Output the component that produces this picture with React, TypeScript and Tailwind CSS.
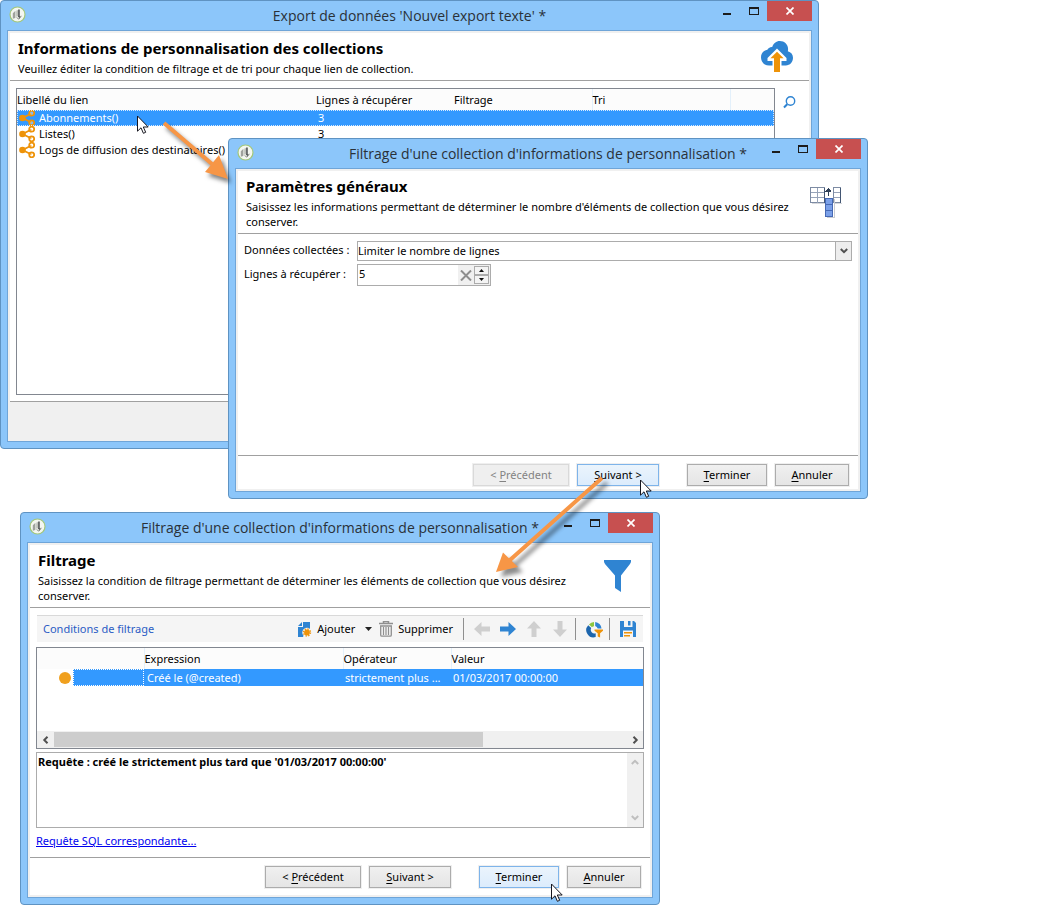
import type { ReactNode } from "react";

function AppLogo() {
  return (
    <svg width="17" height="17" viewBox="0 0 17 17" aria-hidden="true" className="block">
      <circle cx="8.5" cy="8.5" r="7.5" fill="#f4f7f1" stroke="#a3c77a" strokeWidth="1.200" />
      <path d="M3.800 7.200 6.200 5v7l-2.400.8z" fill="#9fa29d" />
      <path d="M6.200 5 7.800 5.600v5L6.200 12z" fill="#cfd2cc" />
      <path d="M8.200 4.200v6" stroke="#a5a8a3" strokeWidth="1" />
      <path d="M9.200 3.400h1.500v7.200l1-.8-.8 2.400L8.600 10.600l.6-.2z" fill="#45484a" />
      <path d="m7.600 11.600 2.400 1.600 2.400-3.400" fill="none" stroke="#8f928d" strokeWidth="1" />
    </svg>
  );
}

function CloudUpload() {
  return (
    <svg width="32" height="32" viewBox="0 0 32 32" aria-hidden="true">
      <path
        d="M8 24.5C3.300 24.500 0 21 0 16.300c0-4 2.600-7 6.400-7.600C7 7.200 9 5.700 11.200 5.900 12.400 2.400 15.200 0 18.800 0c4.700 0 8.200 3.400 8.300 8 0 .8-.1 1.500-.3 2.200 3.200.8 5.200 3.300 5.200 6.600 0 4.300-3 7.700-7.200 7.700z"
        fill="#2f84d2"
      />
      <path d="M16 7.500 25.500 17v3h-5V26h-9v-6h-5v-3z" fill="#fff" />
      <path d="M16 10.700 22.600 17.300H19V31h-6V17.300H9.400z" fill="#ee9309" />
    </svg>
  );
}

function ColumnsIcon() {
  return (
    <svg width="32" height="32" viewBox="0 0 32 32" shapeRendering="crispEdges" aria-hidden="true">
      <path d="M2 17.500h13M25 17.500h7" fill="none" stroke="#d6d8dc" />
      <path d="M.5 1.500h14v15H.5zM23.500 1.500h7v15h-7z" fill="#fff" stroke="#7d8ba3" />
      <path d="M.5 6.500h14M.5 11.500h14M7.500 1.500v15M23.500 6.500h7M23.500 11.500h7" fill="none" stroke="#97a3b8" />
      <path d="M14.500 2v15M30.500 2v15" stroke="#435673" />
      <path d="M17 31.500h7V13" fill="none" stroke="#c9ccd2" />
      <path d="M15.500 12.500h7v18h-7z" fill="#7ba0e8" stroke="#4669b4" />
      <path d="M15.500 18.500h7M15.500 24.500h7" stroke="#4669b4" />
      <path d="M18 3h1v7h-1z" fill="#2f4058" />
      <path d="m18.500 2-3 3.500h6z" fill="#2f4058" />
    </svg>
  );
}

function FunnelIcon() {
  return (
    <svg width="32" height="32" viewBox="0 0 32 32" aria-hidden="true">
      <path d="M2 0h27v1.500c0 1-.4 1.700-1.200 2.700L19 15.500V32l-6-4v-12.500L3.200 4.200C2.400 3.200 2 2.500 2 1.500z" fill="#2f84d2" />
    </svg>
  );
}

function LinkIcon() {
  return (
    <svg width="16" height="16" viewBox="0 0 16 16" aria-hidden="true" className="block shrink-0">
      <path d="M12.500 3.500 3.500 8l9 4.500" fill="none" stroke="#ee9309" strokeWidth="1.800" />
      <circle cx="3.500" cy="8" r="3.300" fill="#ee9309" />
      <circle cx="12.700" cy="3.200" r="2.500" fill="#fff" fillOpacity=".35" stroke="#ee9309" strokeWidth="1.800" />
      <circle cx="12.700" cy="12.800" r="2.500" fill="#fff" fillOpacity=".35" stroke="#ee9309" strokeWidth="1.800" />
    </svg>
  );
}

function SearchIcon() {
  return (
    <svg width="13" height="13" viewBox="0 0 13 13" aria-hidden="true" className="block">
      <circle cx="7.500" cy="5" r="4.200" fill="none" stroke="#2f84d2" strokeWidth="1.400" />
      <path d="m4.200 8.300-3.200 3.200" stroke="#2f84d2" strokeWidth="2" />
    </svg>
  );
}

function Pointer() {
  return (
    <svg width="12" height="19" viewBox="0 0 12 19" aria-hidden="true" className="block">
      <path d="M.5 1v15.200l3.500-3.400 2.400 5.500 2.300-1-2.400-5.300h4.900z" fill="#fff" stroke="#16161f" strokeWidth="1" />
    </svg>
  );
}

type WindowProps = { title: string; place: string; children: ReactNode };

function AppWindow({ title, place, children }: WindowProps) {
  return (
    <section className={`absolute rounded-[4px] border border-[#5f93c2] bg-[#8cc6fa] px-[6px] pb-[6px] ${place}`}>
      <header className="grid h-[29px] grid-cols-[1fr_auto_1fr] items-start">
        <span className="pl-[2px] pt-[5px]">
          <AppLogo />
        </span>
        <h1 className="pt-[5px] font-['Open_Sans',sans-serif] text-[14px] leading-[20px] whitespace-nowrap text-[#2a3138]">
          {title}
        </h1>
        <div className="flex justify-end text-[#1c1c1c]">
          <button type="button" aria-label="Réduire" className="flex h-[20px] w-[26px] items-center justify-center">
            <svg width="8" height="8" viewBox="0 0 8 8" className="block">
              <path d="M0 6h8v2H0z" fill="currentColor" />
            </svg>
          </button>
          <button type="button" aria-label="Agrandir" className="flex h-[20px] w-[27px] items-center justify-center">
            <svg width="10" height="8" viewBox="0 0 10 8" className="block" shapeRendering="crispEdges">
              <path d="M0 0h10v8H0zM1 2v5h8V2z" fillRule="evenodd" fill="currentColor" />
            </svg>
          </button>
          <button
            type="button"
            aria-label="Fermer"
            className="flex h-[20px] w-[45px] items-center justify-center bg-[#c75050] text-white"
          >
            <svg width="8" height="8" viewBox="0 0 8 8" className="block">
              <path d="m.5.5 7 7M7.500.5l-7 7" stroke="currentColor" strokeWidth="1.700" />
            </svg>
          </button>
        </div>
      </header>
      <div className="border border-[#6fa5d8] bg-[#f0f0f0] p-[2px]">
        <div className="bg-white">{children}</div>
      </div>
    </section>
  );
}

function StepHeader({ title, text, icon }: { title: string; text: string; icon: ReactNode }) {
  return (
    <div className="flex items-center border-b border-[#a0a0a0] pr-4 pl-2">
      <div className="grow pt-[5px] pb-[4px]">
        <h2 className="text-[15px] leading-[20px] font-bold">{title}</h2>
        <p className="mt-[3px] max-w-[556px] leading-[15px]">{text}</p>
      </div>
      {icon}
    </div>
  );
}

type ActionProps = { access: string; rest: string; before?: string; width: string; state?: "hot" | "off" };

function Action({ access, rest, before = "", width, state }: ActionProps) {
  const look =
    state === "hot"
      ? "border-[#7eb4ea] bg-linear-to-b from-[#ebf4fc] to-[#dcecfc]"
      : state === "off"
        ? "border-[#d9d9d9] bg-[#efefef] text-[#838383]"
        : "border-[#acacac] bg-linear-to-b from-[#f0f0f0] to-[#e5e5e5]";
  return (
    <button
      type="button"
      disabled={state === "off"}
      className={`h-[22px] border leading-[20px] ring-1 ring-[#efefef] ${width} ${look}`}
    >
      {before}
      <span className="underline underline-offset-2">{access}</span>
      {rest}
    </button>
  );
}

function Actions({ pad, first, next, finish }: { pad: string; first?: "off"; next?: "hot"; finish?: "hot" }) {
  return (
    <div className={`flex justify-end gap-2 border-t border-[#a0a0a0] pt-2 pr-[9px] ${pad}`}>
      <Action before="< " access="P" rest="récédent" width="w-[96px]" state={first} />
      <Action access="S" rest="uivant >" width="w-[82px]" state={next} />
      <div className="ml-5 flex gap-2">
        <Action access="T" rest="erminer" width="w-[80px]" state={finish} />
        <Action access="A" rest="nnuler" width="w-[74px]" />
      </div>
    </div>
  );
}

const links = [
  { label: "Abonnements()", lines: "3" },
  { label: "Listes()", lines: "3" },
  { label: "Logs de diffusion des destinataires()", lines: "3" },
];

function ExportWindow() {
  return (
    <AppWindow title="Export de données 'Nouvel export texte' *" place="top-0 left-0 w-[819px]">
      <StepHeader
        title="Informations de personnalisation des collections"
        text="Veuillez éditer la condition de filtrage et de tri pour chaque lien de collection."
        icon={<CloudUpload />}
      />
      <div className="flex items-start gap-2 pt-[7px] pr-[13px] pb-[6px] pl-[6px]">
        <div className="min-h-[307px] grow border border-[#828790]">
          <table className="w-full table-fixed border-collapse text-left">
            <colgroup>
              <col className="w-[299px]" />
              <col className="w-[138px]" />
              <col className="w-[138px]" />
              <col className="w-[138px]" />
              <col />
            </colgroup>
            <thead>
              <tr className="h-[21px] bg-[#fcfcfc]">
                <th className="p-0 font-normal">Libellé du lien</th>
                <th className="p-0 font-normal">Lignes à récupérer</th>
                <th className="p-0 font-normal">Filtrage</th>
                <th className="border-l border-[#e3f0fb] p-0 font-normal">Tri</th>
                <th className="border-l border-[#e3f0fb] p-0" />
              </tr>
            </thead>
            <tbody>
              {links.map((link, i) => (
                <tr
                  key={link.label}
                  className={
                    i === 0
                      ? "h-[16px] bg-[#3399ff] text-white outline-1 -outline-offset-1 outline-white/80 outline-dotted"
                      : "h-[16px]"
                  }
                >
                  <td className="p-0">
                    <span className="flex items-center gap-1 pl-[2px] leading-[16px] whitespace-nowrap">
                      <LinkIcon />
                      {link.label}
                    </span>
                  </td>
                  <td className="p-0 pl-[2px] leading-[16px]">{link.lines}</td>
                  <td className="p-0" />
                  <td className="p-0" />
                  <td className="p-0" />
                </tr>
              ))}
            </tbody>
          </table>
        </div>
        <button type="button" aria-label="Afficher le détail" className="pt-[8px]">
          <SearchIcon />
        </button>
      </div>
      <div className="h-[38px] border-t border-[#a0a0a0] bg-[#f0f0f0]" />
    </AppWindow>
  );
}

function SettingsWindow() {
  return (
    <AppWindow
      title="Filtrage d'une collection d'informations de personnalisation *"
      place="top-[138px] left-[228px] w-[640px]"
    >
      <StepHeader
        title="Paramètres généraux"
        text="Saisissez les informations permettant de déterminer le nombre d'éléments de collection que vous désirez conserver."
        icon={<ColumnsIcon />}
      />
      <div className="grid min-h-[221px] grid-cols-[113px_1fr] content-start gap-y-[3px] pt-[7px] pr-[6px] pl-[6px]">
        <label htmlFor="collected" className="leading-[18px]">
          Données collectées :
        </label>
        <div className="grid grid-cols-[1fr_16px] border border-[#acacac]">
          <select
            id="collected"
            className="col-span-2 col-start-1 row-start-1 h-[18px] w-full appearance-none bg-transparent leading-[18px] outline-none"
          >
            <option>Limiter le nombre de lignes</option>
          </select>
          <span className="pointer-events-none col-start-2 row-start-1 flex items-center justify-center border-l border-[#acacac] bg-[#ededed]">
            <svg width="8" height="6" viewBox="0 0 8 6">
              <path d="m.8 1 3.200 3.200L7.200 1" fill="none" stroke="#505050" strokeWidth="2" />
            </svg>
          </span>
        </div>
        <label htmlFor="lines" className="leading-[20px]">
          Lignes à récupérer :
        </label>
        <div className="flex h-[22px] w-[134px] border border-[#acacac] bg-[#f0f0f0] pr-px">
          <input id="lines" defaultValue="5" className="w-[100px] min-w-0 bg-white pb-[2px] pl-px outline-none" />
          <button type="button" aria-label="Effacer" className="flex grow items-center justify-center">
            <svg width="12" height="11" viewBox="0 0 12 11">
              <path d="m1 .5 10 10M11 .5l-10 10" stroke="#8d8d8d" strokeWidth="2" />
            </svg>
          </button>
          <span className="my-px flex w-[15px] flex-col justify-between">
            <button type="button" aria-label="Augmenter" className="flex h-[9px] items-center justify-center border border-[#acacac] bg-[#f4f4f4]">
              <svg width="5" height="3" viewBox="0 0 5 3">
                <path d="M2.500 0 5 3H0z" fill="#111" />
              </svg>
            </button>
            <button type="button" aria-label="Diminuer" className="flex h-[9px] items-center justify-center border border-[#acacac] bg-[#f4f4f4]">
              <svg width="5" height="3" viewBox="0 0 5 3">
                <path d="M2.500 3 5 0H0z" fill="#111" />
              </svg>
            </button>
          </span>
        </div>
      </div>
      <Actions pad="pb-[3px]" first="off" next="hot" />
    </AppWindow>
  );
}

function ArrowIcon({ turn, color }: { turn: string; color: string }) {
  return (
    <svg width="16" height="14" viewBox="0 0 16 14" aria-hidden="true" className={`block ${turn} ${color}`}>
      <path d="M0 4.500h8.500V0L16 7l-7.500 7V9.500H0z" fill="currentColor" />
    </svg>
  );
}

function Toolbar() {
  return (
    <div className="mx-px flex h-[27px] items-center border-t border-[#d9d9d9] bg-[#f5f5f5] pr-[7px] pl-[6px]">
      <span className="grow text-[#2b5cc4]">Conditions de filtrage</span>
      <button type="button" className="flex items-center gap-[5px]">
        <svg width="14" height="15" viewBox="0 0 14 15" aria-hidden="true">
          <path d="M5 0h7v7.500H8L5 15H0V5h5z" fill="#2f84d2" />
          <path d="M0 4 4 0v4z" fill="#2f84d2" />
          <circle cx="9" cy="10.500" r="4.700" fill="#f5f5f5" />
          <circle cx="9" cy="10.500" r="2.900" fill="#ee9309" />
          <circle cx="9" cy="10.500" r="3.500" fill="none" stroke="#ee9309" strokeWidth="1.400" strokeDasharray="1.400 1.350" />
        </svg>
        Ajouter
      </button>
      <button type="button" aria-label="Options d'ajout" className="ml-[10px]">
        <svg width="7" height="4" viewBox="0 0 7 4" className="block">
          <path d="M0 0h7L3.500 4z" fill="#222" />
        </svg>
      </button>
      <button type="button" className="ml-[7px] flex items-center gap-[5px]">
        <svg width="14" height="16" viewBox="0 0 14 16" fill="none" stroke="#8f8f8f" aria-hidden="true">
          <path d="M0 2.500h14M4.500 2V.6h5V2" strokeWidth="1.500" />
          <path d="M1.700 5v9q0 1.200 1.200 1.200h8.200q1.200 0 1.200-1.200V5z" strokeWidth="1.300" />
          <path d="M4.500 6v8M7 6v8M9.500 6v8" strokeWidth="1.200" />
        </svg>
        Supprimer
      </button>
      <span className="mr-[10px] ml-[10px] h-[22px] w-px bg-[#8f8f8f]" />
      <div className="flex items-center gap-[10px]">
        <button type="button" aria-label="Précédent">
          <ArrowIcon turn="rotate-180" color="text-[#cfcfcf]" />
        </button>
        <button type="button" aria-label="Suivant">
          <ArrowIcon turn="rotate-0" color="text-[#2f84d2]" />
        </button>
        <button type="button" aria-label="Monter">
          <ArrowIcon turn="-rotate-90" color="text-[#cfcfcf]" />
        </button>
        <button type="button" aria-label="Descendre">
          <ArrowIcon turn="rotate-90" color="text-[#cfcfcf]" />
        </button>
      </div>
      <span className="mr-[10px] ml-[7px] h-[22px] w-px bg-[#8f8f8f]" />
      <button type="button" aria-label="Répartition">
        <svg width="17" height="17" viewBox="0 0 17 17" className="block">
          <path d="M8 1v4.200a3.500 3.500 0 0 0-2 1L3 3.400A7 7 0 0 1 8 1z" fill="#8cc63f" />
          <path d="M9.200 1a7 7 0 0 1 6.300 6.500h-3.800a3.600 3.600 0 0 0-2.500-2.500z" fill="#2f84d2" />
          <path d="M2.200 4.200 5.200 7a3.700 3.700 0 0 0 4.500 5.200v3.900A7.300 7.300 0 0 1 2.200 4.200z" fill="#1c65ad" />
          <path d="M8.500 8.500H17v1.300l-2.900 2.500V16.500l-2.400-1v-3.200L8.500 9.800z" fill="#ee9309" />
        </svg>
      </button>
      <span className="mr-[10px] ml-[6px] h-[22px] w-px bg-[#8f8f8f]" />
      <button type="button" aria-label="Enregistrer">
        <svg width="16" height="16" viewBox="0 0 16 16" className="block">
          <path d="M0 0h4v6h8.500V0H14l2 2v14h-3V9.500H3V16H0z" fill="#2f84d2" />
          <path d="M8 0h2.500v4.500H8z" fill="#2f84d2" />
          <path d="M4 11h8v1.600H4zM4 14h6v1.600H4z" fill="#ee9309" />
        </svg>
      </button>
    </div>
  );
}

function FilterWindow() {
  return (
    <AppWindow
      title="Filtrage d'une collection d'informations de personnalisation *"
      place="top-[512px] left-[20px] w-[640px]"
    >
      <StepHeader
        title="Filtrage"
        text="Saisissez la condition de filtrage permettant de déterminer les éléments de collection que vous désirez conserver."
        icon={<FunnelIcon />}
      />
      <div className="pt-[7px] pr-[6px] pb-[8px] pl-[6px]">
        <Toolbar />
        <div className="mt-[5px] flex h-[102px] flex-col justify-between border border-[#828790]">
          <table className="w-full table-fixed border-collapse text-left">
            <colgroup>
              <col className="w-[36px]" />
              <col className="w-[71px]" />
              <col className="w-[199px]" />
              <col className="w-[108px]" />
              <col />
            </colgroup>
            <thead>
              <tr className="h-[21px] bg-[#fcfcfc]">
                <th className="p-0" />
                <th className="p-0" />
                <th className="border-l border-[#e3f0fb] p-0 font-normal">Expression</th>
                <th className="border-l border-[#e3f0fb] p-0 font-normal">Opérateur</th>
                <th className="border-l border-[#e3f0fb] p-0 font-normal">Valeur</th>
              </tr>
            </thead>
            <tbody>
              <tr className="h-[17px] text-white">
                <td className="p-0 pl-[22px]">
                  <span className="block size-[12px] rounded-full bg-[#f0a01e]" />
                </td>
                <td className="bg-[#3399ff] p-0 outline-1 -outline-offset-1 outline-white outline-dotted" />
                <td className="bg-[#3399ff] p-0 pl-[3px] leading-[17px]">Créé le (@created)</td>
                <td className="bg-[#3399ff] p-0 pl-[2px] leading-[17px] whitespace-nowrap">strictement plus ...</td>
                <td className="bg-[#3399ff] p-0 pl-[2px] leading-[17px]">01/03/2017 00:00:00</td>
              </tr>
            </tbody>
          </table>
          <div className="flex h-[17px] items-center bg-[#f0f0f0]">
            <button type="button" aria-label="Défiler à gauche" className="flex w-[17px] justify-center">
              <svg width="8" height="8" viewBox="0 0 8 8">
                <path d="M5.500.8 2.300 4l3.200 3.200" fill="none" stroke="#505050" strokeWidth="2" />
              </svg>
            </button>
            <div className="h-[15px] grow">
              <div className="h-full w-3/4 bg-[#cdcdcd]" />
            </div>
            <button type="button" aria-label="Défiler à droite" className="flex w-[17px] justify-center">
              <svg width="8" height="8" viewBox="0 0 8 8">
                <path d="M2.500.8 5.700 4 2.500 7.200" fill="none" stroke="#505050" strokeWidth="2" />
              </svg>
            </button>
          </div>
        </div>
        <div className="mt-[3px] flex h-[76px] border border-[#acacac]">
          <textarea
            readOnly
            aria-label="Requête"
            defaultValue="Requête : créé le strictement plus tard que '01/03/2017 00:00:00'"
            className="grow resize-none pt-[1px] pl-[1px] leading-[16px] font-bold outline-none"
          />
          <div className="flex w-[16px] flex-col items-center justify-between bg-[#f0f0f0] py-[6px]">
            <svg width="8" height="6" viewBox="0 0 8 6" aria-hidden="true">
              <path d="M.8 5 4 1.800 7.200 5" fill="none" stroke="#bfbfbf" strokeWidth="2" />
            </svg>
            <svg width="8" height="6" viewBox="0 0 8 6" aria-hidden="true">
              <path d="m.8 1 3.200 3.200L7.200 1" fill="none" stroke="#bfbfbf" strokeWidth="2" />
            </svg>
          </div>
        </div>
        <a href="#sql" className="mt-[5px] block w-fit leading-[16px] text-[#0000ee] underline">
          Requête SQL correspondante...
        </a>
      </div>
      <Actions pad="pb-[7px]" finish="hot" />
    </AppWindow>
  );
}

export default function App() {
  return (
    <main className="relative min-h-screen overflow-hidden bg-white font-['Noto_Sans','Open_Sans',sans-serif] text-[11px] leading-[16px] text-black">
      <ExportWindow />
      <SettingsWindow />
      <FilterWindow />

      <svg
        width="90"
        height="80"
        viewBox="0 0 90 80"
        aria-hidden="true"
        className="pointer-events-none absolute top-[115px] left-[155px] drop-shadow-[3px_4px_2px_rgba(0,0,0,0.5)]"
      >
        <path d="M9 8 57 49" stroke="#f79646" strokeWidth="4" />
        <path d="M73 64 50 57 64 40z" fill="#f79646" />
      </svg>
      <svg
        width="130"
        height="120"
        viewBox="0 0 130 120"
        aria-hidden="true"
        className="pointer-events-none absolute top-[468px] left-[486px] drop-shadow-[5px_5px_2px_rgba(0,0,0,0.45)]"
      >
        <path d="M116 10 24 92" stroke="#f79646" strokeWidth="4" />
        <path d="M10 104 17 84.500 32 99z" fill="#f79646" />
      </svg>

      <div className="pointer-events-none absolute top-[115px] left-[137px]">
        <Pointer />
      </div>
      <div className="pointer-events-none absolute top-[479px] left-[640px]">
        <Pointer />
      </div>
      <div className="pointer-events-none absolute top-[883px] left-[551px]">
        <Pointer />
      </div>
    </main>
  );
}
